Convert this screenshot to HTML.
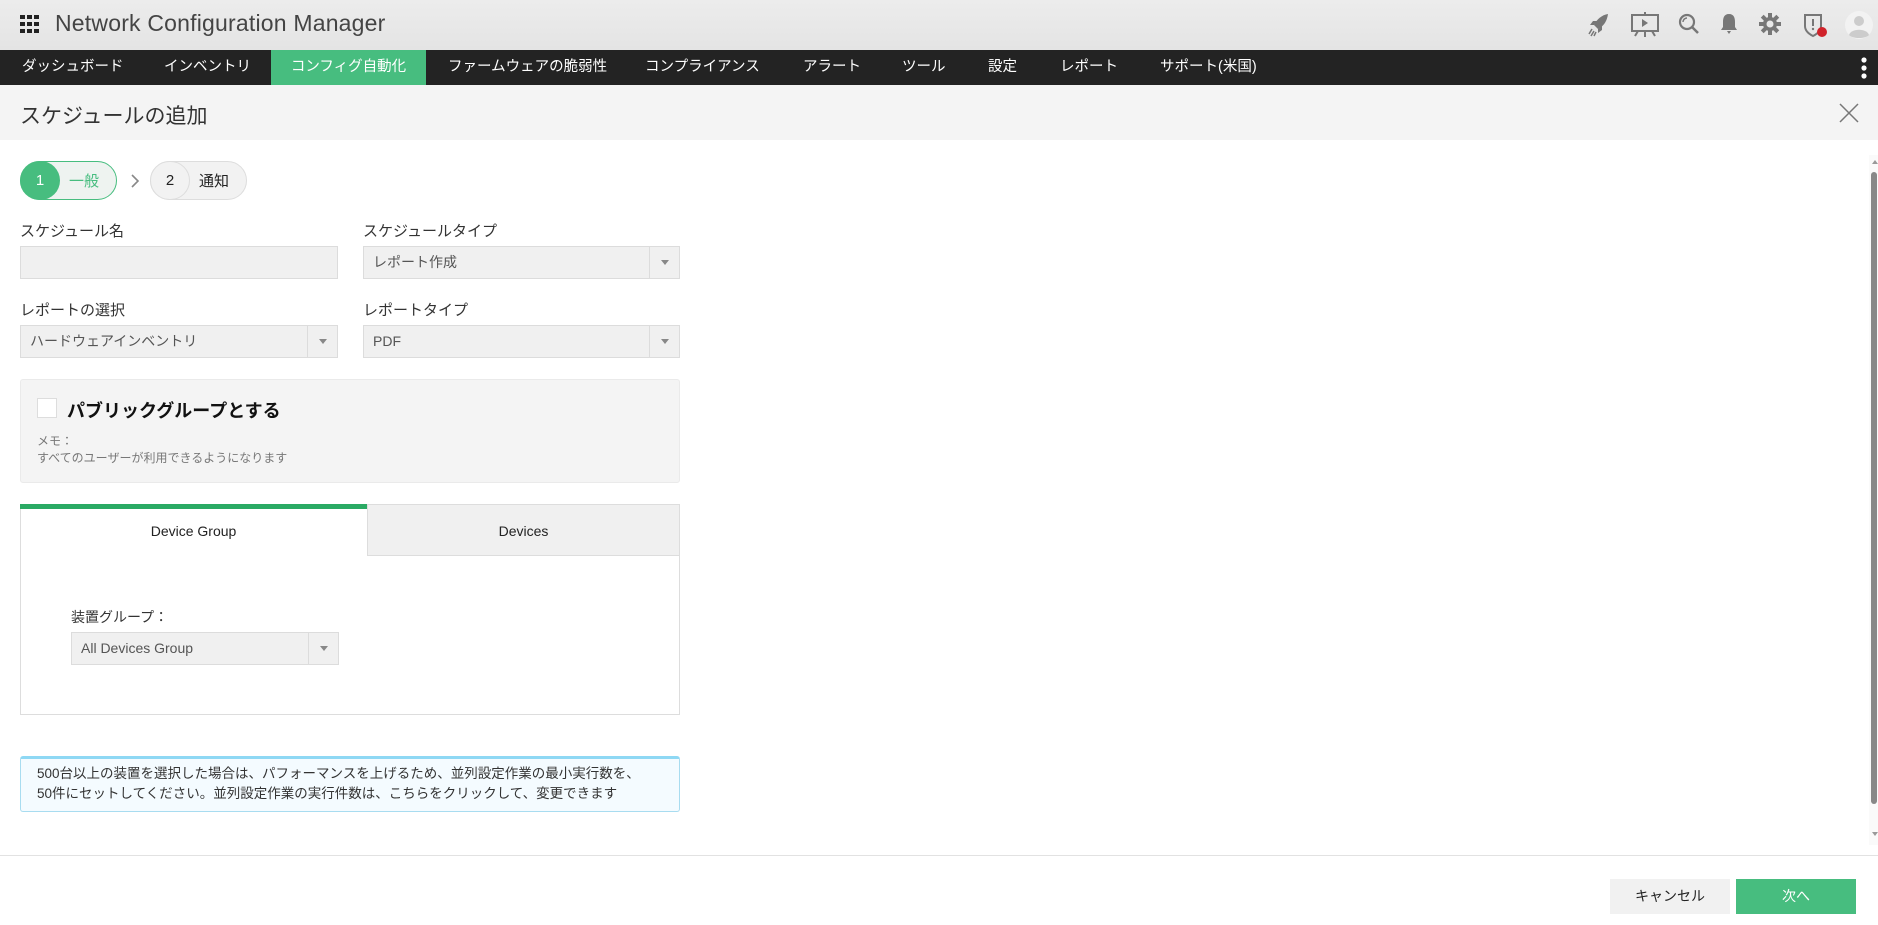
<!DOCTYPE html>
<html><head><meta charset="utf-8"><style>
*{margin:0;padding:0;box-sizing:border-box}
body{width:1878px;height:925px;overflow:hidden;background:#fff;font-family:"Liberation Sans","Noto Sans CJK JP",sans-serif;color:#333;position:relative}
.abs{position:absolute}
#hdr{left:0;top:0;width:1878px;height:50px;background:linear-gradient(#ececec,#e4e4e4)}
#nav{left:0;top:50px;width:1878px;height:35px;background:#232323}
#nav span{position:absolute;top:0;line-height:35px;color:#fff;font-size:14.5px}
#title{left:0;top:85px;width:1878px;height:55px;background:#f4f4f4}
.lbl{font-size:15px;color:#333}
.inp{background:#f0f0f0;border:1px solid #dcdcdc;height:33px}
.sel .arr{position:absolute;right:0;top:0;width:30px;height:31px;border-left:1px solid #dcdcdc}
.sel .arr:after{content:"";position:absolute;left:11px;top:13px;border-left:4px solid transparent;border-right:4px solid transparent;border-top:5px solid #888}
.sel .t{position:absolute;left:9px;top:0;line-height:31px;font-size:14px;color:#555}
</style></head><body>
<div id="hdr" class="abs">
 <svg class="abs" style="left:20px;top:15px" width="20" height="18" viewBox="0 0 20 18"><g fill="#222"><rect x="0" y="0" width="5" height="4"/><rect x="7" y="0" width="5" height="4"/><rect x="14" y="0" width="5" height="4"/><rect x="0" y="7" width="5" height="4"/><rect x="7" y="7" width="5" height="4"/><rect x="14" y="7" width="5" height="4"/><rect x="0" y="14" width="5" height="4"/><rect x="7" y="14" width="5" height="4"/><rect x="14" y="14" width="5" height="4"/></g></svg>
 <div class="abs" style="left:55px;top:10px;font-size:23px;color:#444;letter-spacing:0.2px">Network Configuration Manager</div>
 <svg class="abs" style="left:1588px;top:13px" width="22" height="24" viewBox="0 0 22 24"><path d="M20 1 C14 2 9 6 6 12 L10 16 C16 13 19 8 20 1Z" fill="#777"/><path d="M6 12 L2 12 L5 8 L9 8Z M10 16 L10 20 L14 17 L14 13Z" fill="#777"/><path d="M4 16 L1 21 M6 18 L3 23 M8 19 L6 23" stroke="#777" stroke-width="1.5"/></svg>
 <svg class="abs" style="left:1630px;top:12px" width="30" height="26" viewBox="0 0 30 26"><rect x="2" y="3" width="26" height="16" fill="none" stroke="#777" stroke-width="2"/><path d="M12 7 L18 11 L12 15Z" fill="#777"/><path d="M15 0 V3 M15 19 V25 M8 19 L5 24 M22 19 L25 24" stroke="#777" stroke-width="2"/></svg>
 <svg class="abs" style="left:1678px;top:13px" width="22" height="22" viewBox="0 0 22 22"><circle cx="9" cy="9" r="7" fill="none" stroke="#777" stroke-width="2.2"/><path d="M5 9 A4 4 0 0 1 9 5" fill="none" stroke="#777" stroke-width="1.5"/><path d="M14 14 L20 20" stroke="#777" stroke-width="2.5"/></svg>
 <svg class="abs" style="left:1720px;top:13px" width="18" height="22" viewBox="0 0 18 22"><path d="M9 1 C4 1 3 5 3 9 V14 L1 17 H17 L15 14 V9 C15 5 14 1 9 1Z M7 18 H11 L9 21Z" fill="#777"/></svg>
 <svg class="abs" style="left:1759px;top:13px" width="22" height="22" viewBox="0 0 22 22"><g fill="#777"><circle cx="11" cy="11" r="7"/><rect x="9" y="0" width="4" height="22"/><rect x="0" y="9" width="22" height="4"/><rect x="9" y="0" width="4" height="22" transform="rotate(45 11 11)"/><rect x="9" y="0" width="4" height="22" transform="rotate(-45 11 11)"/></g><circle cx="11" cy="11" r="3.5" fill="#e8e8e8"/></svg>
 <svg class="abs" style="left:1803px;top:13px" width="28" height="26" viewBox="0 0 28 26"><path d="M2 2 H18 V13 C18 18 14 21 10 23 C6 21 2 18 2 13Z" fill="none" stroke="#777" stroke-width="2"/><path d="M10 6 V13" stroke="#777" stroke-width="2"/><circle cx="10" cy="16" r="1.2" fill="#777"/><circle cx="19" cy="19" r="5" fill="#d0222a"/></svg>
 <svg class="abs" style="left:1845px;top:11px" width="28" height="28" viewBox="0 0 28 28"><circle cx="14" cy="14" r="14" fill="#f2f2f2"/><circle cx="14" cy="10" r="5" fill="#ccc"/><path d="M4 24 C6 17 22 17 24 24 C20 28 8 28 4 24Z" fill="#ccc"/></svg>
</div>
<div id="nav" class="abs">
 <span style="left:22px">ダッシュボード</span>
 <span style="left:164px">インベントリ</span>
 <span style="left:271px;width:155px;background:#47bd7f;text-align:center">コンフィグ自動化</span>
 <span style="left:448px">ファームウェアの脆弱性</span>
 <span style="left:645px">コンプライアンス</span>
 <span style="left:803px">アラート</span>
 <span style="left:902px">ツール</span>
 <span style="left:988px">設定</span>
 <span style="left:1060px">レポート</span>
 <span style="left:1160px">サポート(米国)</span>
 <svg class="abs" style="left:1860px;top:7px" width="8" height="22" viewBox="0 0 8 22"><circle cx="4" cy="3" r="2.6" fill="#fff"/><circle cx="4" cy="11" r="2.6" fill="#fff"/><circle cx="4" cy="19" r="2.6" fill="#fff"/></svg>
</div>
<div id="title" class="abs">
 <div class="abs" style="left:20px;top:15px;font-size:21px;color:#333">スケジュールの追加</div>
 <svg class="abs" style="left:1839px;top:18px" width="20" height="20" viewBox="0 0 20 20"><path d="M1 1 L19 19 M19 1 L1 19" stroke="#777" stroke-width="1.5"/></svg>
</div>
<div class="abs" style="left:20px;top:161px;width:97px;height:39px;border:1px solid #47bd7f;border-radius:20px;background:#eef3f0"></div>
<div class="abs" style="left:20px;top:161px;width:40px;height:39px;border-radius:20px;background:#47bd7f;color:#fff;font-size:15px;line-height:39px;text-align:center">1</div>
<div class="abs" style="left:69px;top:170px;font-size:15px;color:#47bd7f">一般</div>
<svg class="abs" style="left:130px;top:173px" width="10" height="16" viewBox="0 0 10 16"><path d="M2 2 L8 8 L2 14" fill="none" stroke="#888" stroke-width="1.6"/></svg>
<div class="abs" style="left:150px;top:161px;width:97px;height:39px;border:1px solid #ddd;border-radius:20px;background:#f2f2f2"></div>
<div class="abs" style="left:150px;top:161px;width:40px;height:39px;border:1px solid #ddd;border-radius:20px;background:#f2f2f2;color:#222;font-size:15px;line-height:37px;text-align:center">2</div>
<div class="abs" style="left:199px;top:170px;font-size:15px;color:#222">通知</div>
<div class="abs lbl" style="left:20px;top:220px">スケジュール名</div>
<div class="abs lbl" style="left:363px;top:220px">スケジュールタイプ</div>
<div class="abs inp" style="left:20px;top:246px;width:318px"></div>
<div class="abs inp sel" style="left:363px;top:246px;width:317px"><span class="t">レポート作成</span><span class="arr"></span></div>
<div class="abs lbl" style="left:20px;top:299px">レポートの選択</div>
<div class="abs lbl" style="left:363px;top:299px">レポートタイプ</div>
<div class="abs inp sel" style="left:20px;top:325px;width:318px"><span class="t">ハードウェアインベントリ</span><span class="arr"></span></div>
<div class="abs inp sel" style="left:363px;top:325px;width:317px"><span class="t">PDF</span><span class="arr"></span></div>
<div class="abs" style="left:20px;top:379px;width:660px;height:104px;background:#f4f4f4;border:1px solid #eaeaea;border-radius:3px">
 <div class="abs" style="left:16px;top:18px;width:20px;height:20px;background:#fff;border:1px solid #ddd"></div>
 <div class="abs" style="left:46px;top:17px;font-size:18px;font-weight:bold;color:#111">パブリックグループとする</div>
 <div class="abs" style="left:16px;top:53px;font-size:12px;color:#777;line-height:17px">メモ：<br>すべてのユーザーが利用できるようになります</div>
</div>
<div class="abs" style="left:20px;top:504px;width:660px;height:211px;border:1px solid #ddd"></div>
<div class="abs" style="left:20px;top:504px;width:347px;height:5px;background:#2aaa64"></div>
<div class="abs" style="left:367px;top:504px;width:313px;height:52px;background:#f0f0f0;border:1px solid #ddd"></div>
<div class="abs" style="left:20px;top:523px;width:347px;text-align:center;font-size:14px;color:#222">Device Group</div>
<div class="abs" style="left:367px;top:523px;width:313px;text-align:center;font-size:14px;color:#222">Devices</div>
<div class="abs" style="left:71px;top:607px;font-size:14px;color:#333">装置グループ：</div>
<div class="abs inp sel" style="left:71px;top:632px;width:268px"><span class="t">All Devices Group</span><span class="arr"></span></div>
<div class="abs" style="left:20px;top:756px;width:660px;height:56px;background:#f4fbff;border:1px solid #a8dcf0;border-top:3px solid #8ed8f4;border-radius:3px;padding:5px 0 0 16px;font-size:13.5px;line-height:20px;color:#333">500台以上の装置を選択した場合は、パフォーマンスを上げるため、並列設定作業の最小実行数を、<br>50件にセットしてください。並列設定作業の実行件数は、こちらをクリックして、変更できます</div>
<div class="abs" style="left:1869px;top:155px;width:9px;height:690px;background:#fafafa"></div>
<div class="abs" style="left:1872px;top:160px;border-left:3px solid transparent;border-right:3px solid transparent;border-bottom:4px solid #999"></div>
<div class="abs" style="left:1871px;top:172px;width:6px;height:632px;background:#888;border-radius:3px"></div>
<div class="abs" style="left:1872px;top:832px;border-left:3px solid transparent;border-right:3px solid transparent;border-top:4px solid #999"></div>
<div class="abs" style="left:0;top:855px;width:1878px;height:1px;background:#e2e2e2"></div>
<div class="abs" style="left:1610px;top:879px;width:120px;height:35px;background:#f1f1f1;text-align:center;line-height:35px;font-size:14px;color:#222">キャンセル</div>
<div class="abs" style="left:1736px;top:879px;width:120px;height:35px;background:#47bd7f;text-align:center;line-height:35px;font-size:14px;color:#fff">次へ</div>
</body></html>
